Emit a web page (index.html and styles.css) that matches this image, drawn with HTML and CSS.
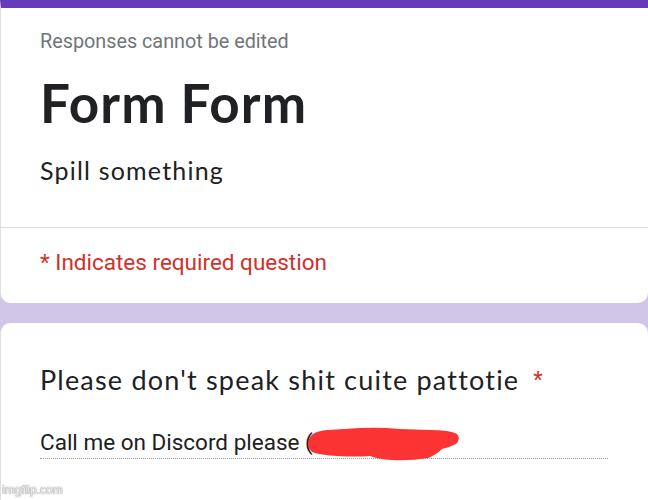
FILE: index.html
```html
<!DOCTYPE html>
<html>
<head>
<meta charset="utf-8">
<link rel="stylesheet" href="styles.css">
</head>
<body>
<div class="page">
  <section class="card header-card">
    <div class="header-top">
      <p class="note">Responses cannot be edited</p>
      <h1 class="title">Form Form</h1>
      <p class="desc">Spill something</p>
    </div>
    <div class="header-bottom">
      <p class="required">* Indicates required question</p>
    </div>
  </section>
  <section class="card question-card">
    <p class="question">Please don't speak shit cuite pattotie<span class="star">*</span></p>
    <div class="answer">
      <span class="answer-text">Call me on Discord please (</span>
      <svg class="scribble" width="165" height="40" viewBox="0 0 165 40">
        <path d="M9 14 Q12 6 28 5 L60 3 Q80 2 100 4 L130 5 Q150 5 157 9 Q161 14 156 19 Q150 22 142 24 Q136 30 128 33 Q110 36 92 35 Q78 34 70 31 Q55 32 38 31 Q20 30 12 27 Q6 22 9 14 Z" fill="#fb3333"/>
      </svg>
    </div>
  </section>
</div>
<span class="watermark">imgflip.com</span>
</body>
</html>
```

FILE: styles.css
```css
html, body {
  margin: 0;
  padding: 0;
}
body {
  background: #d1c5e8;
  width: 648px;
  height: 500px;
  overflow: hidden;
  position: relative;
  font-family: Roboto, "Liberation Sans", sans-serif;
}
.page {
  display: flex;
  flex-direction: column;
  gap: 20px;
}
.card {
  background: #ffffff;
}
.header-card {
  border-top: 8px solid #673ab7;
  border-radius: 0 0 10px 10px;
  border-left: 1px solid #e0e0e0;
}
.header-top {
  padding: 22px 0 0 39px;
  height: 220px;
  box-sizing: border-box;
  border-bottom: 1px solid #dadce0;
}
.note {
  margin: 0;
  font-size: 19.8px;
  line-height: 24px;
  color: #70757a;
}
.title {
  margin: 17px 0 0;
  font-family: Lato, sans-serif;
  font-weight: 700;
  font-size: 53px;
  line-height: 64px;
  color: #202124;
  letter-spacing: 1.1px;
}
.desc {
  margin: 20px 0 0;
  font-family: Lato, sans-serif;
  font-size: 25px;
  line-height: 30px;
  color: #202124;
  letter-spacing: 1.2px;
}
.header-bottom {
  padding: 21px 0 0 39px;
  height: 75px;
  box-sizing: border-box;
}
.required {
  margin: 0;
  font-size: 22.5px;
  line-height: 26px;
  color: #d0312a;
}
.question-card {
  border-radius: 10px 10px 0 0;
  border-left: 1px solid #e0e0e0;
  padding: 41px 0 0 39px;
  height: 200px;
  box-sizing: border-box;
}
.question {
  margin: 0;
  font-family: Lato, sans-serif;
  font-size: 27px;
  line-height: 32px;
  color: #202124;
  letter-spacing: 1.2px;
}
.star {
  color: #d93025;
  margin-left: 14px;
  font-size: 22px;
  vertical-align: top;
  font-family: Roboto, sans-serif;
}
.answer {
  position: relative;
  margin-top: 33px;
  width: 568px;
  border-bottom: 1px dotted #9a9a9a;
  padding-bottom: 3px;
}
.answer-text {
  font-size: 22.5px;
  line-height: 26px;
  color: #202124;
  display: block;
}
.scribble {
  position: absolute;
  left: 260px;
  top: -4px;
}
.watermark {
  position: absolute;
  left: 2px;
  bottom: 3px;
  font-size: 12px;
  color: rgba(255,255,255,0.9);
  text-shadow: 0 0 1px #888, 0 0 1px #888;
  font-family: "Liberation Sans", sans-serif;
}
```
